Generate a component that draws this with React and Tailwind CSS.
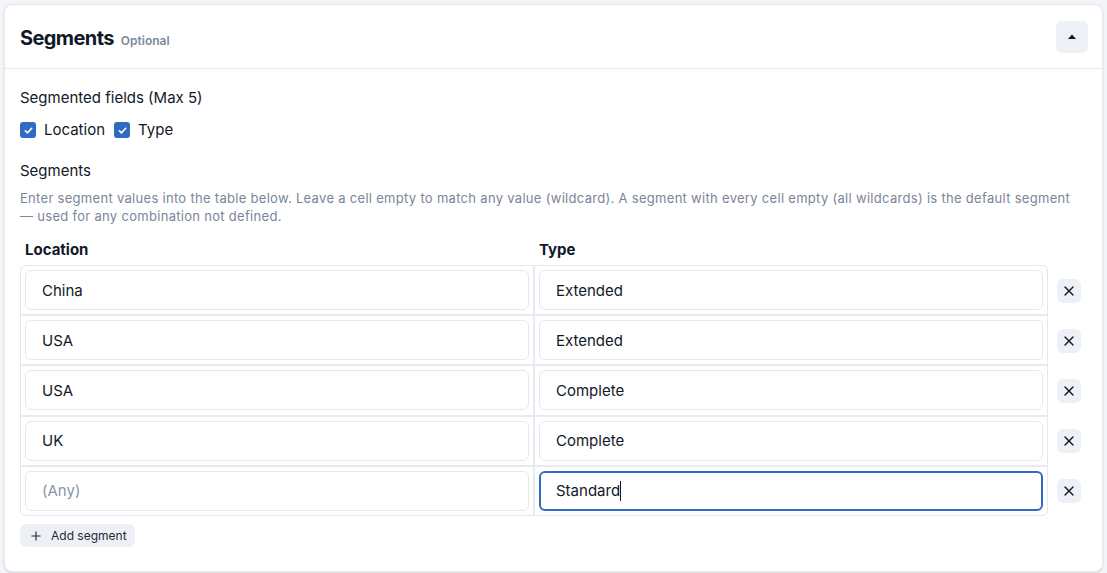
import React from 'react';
import { X, Plus } from 'lucide-react';

const rows = [
  { location: 'China', type: 'Extended' },
  { location: 'USA', type: 'Extended' },
  { location: 'USA', type: 'Complete' },
  { location: 'UK', type: 'Complete' },
  { location: '', type: 'Standard', active: true },
];

const Check = ({ label }) => (
  <label className="flex items-center gap-[8px]">
    <span className="w-[16px] h-[16px] rounded-[3px] bg-[#2f6bc1] flex items-center justify-center">
      <svg width="11" height="11" viewBox="0 0 12 12" fill="none">
        <path d="M2.5 6.3l2.3 2.3 4.7-5" stroke="white" strokeWidth="1.7" strokeLinecap="round" strokeLinejoin="round" />
      </svg>
    </span>
    <span>{label}</span>
  </label>
);

const Cell = ({ value, placeholder, active }) => (
  <div className="bg-white p-[4px]">
    {active ? (
      <div className="h-[40px] rounded-[6px] border-2 border-[#2f6bc1] flex items-center px-[15px] text-[15px] text-[#111827]">
        <span>{value}</span>
        <span className="w-px h-[20px] bg-[#111827]" />
      </div>
    ) : (
      <input
        type="text"
        defaultValue={value}
        placeholder={placeholder}
        className="w-full h-[40px] rounded-[6px] border border-[#e2e8f0] px-[16px] text-[15px] text-[#111827] placeholder:text-[#8a94a6] outline-none"
      />
    )}
  </div>
);

export default function App() {
  return (
    <div className="min-h-screen bg-[#f3f5f8] p-[4px] text-[#111827]" style={{ fontFamily: 'Inter, "Noto Sans", sans-serif' }}>
      <div className="bg-white rounded-lg border border-[#e6eaef] shadow-sm">
        {/* Header */}
        <div className="h-[64px] flex items-center justify-between pl-[15px] pr-[14px] border-b border-[#e2e8f0]">
          <div className="flex items-baseline gap-[7px] pt-[3px]">
            <h2 className="text-[20px] font-bold tracking-[-0.6px]">Segments</h2>
            <span className="text-[12px] font-semibold text-[#7d899b]">Optional</span>
          </div>
          <button className="w-[32px] h-[32px] rounded-md bg-[#edf1f5] flex items-center justify-center">
            <svg width="8" height="5" viewBox="0 0 8 5"><path d="M0 5L4 0.5 8 5z" fill="#111827" /></svg>
          </button>
        </div>

        {/* Body */}
        <div className="px-[15px] pt-[18px] pb-[24px]">
          <p className="text-[15px] leading-[22px]">Segmented fields (Max 5)</p>
          <div className="flex items-center gap-[9px] mt-[10px] text-[15px] leading-[22px]">
            <Check label="Location" />
            <Check label="Type" />
          </div>

          <p className="text-[15px] leading-[22px] mt-[19px]">Segments</p>
          <p className="text-[13px] leading-[18px] tracking-[0.3px] text-[#7a8598] mt-[7px]">
            Enter segment values into the table below. Leave a cell empty to match any value (wildcard). A segment with every cell empty (all wildcards) is the default segment <br />— used for any combination not defined.
          </p>

          <div className="w-[1028px] grid grid-cols-2 gap-[2px] px-px text-[15px] font-bold leading-[22px] mt-[14px] pb-[4px]">
            <div className="px-[4px]">Location</div>
            <div className="px-[4px]">Type</div>
          </div>

          <div className="flex">
            <div className="w-[1028px] border border-[#e2e8f0] rounded-[6px] overflow-hidden bg-[#e6ebf1] grid grid-cols-2 gap-[2px]">
              {rows.map((r, i) => (
                <React.Fragment key={i}>
                  <Cell value={r.location} placeholder="(Any)" />
                  <Cell value={r.type} placeholder="(Any)" active={r.active} />
                </React.Fragment>
              ))}
            </div>
            <div className="flex flex-col pt-px pl-[9px]">
              {rows.map((_, i) => (
                <div key={i} className="h-[50px] flex items-center">
                  <button className="w-[24px] h-[24px] rounded-md bg-[#edf1f5] flex items-center justify-center">
                    <X size={16} strokeWidth={2} color="#111827" />
                  </button>
                </div>
              ))}
            </div>
          </div>

          <button className="mt-[8px] h-[23px] pl-[9px] pr-[8px] rounded-md bg-[#edf1f5] flex items-center gap-[8px] text-[12px] text-[#1f2937]">
            <Plus size={14} strokeWidth={2} />
            Add segment
          </button>
        </div>
      </div>
    </div>
  );
}
